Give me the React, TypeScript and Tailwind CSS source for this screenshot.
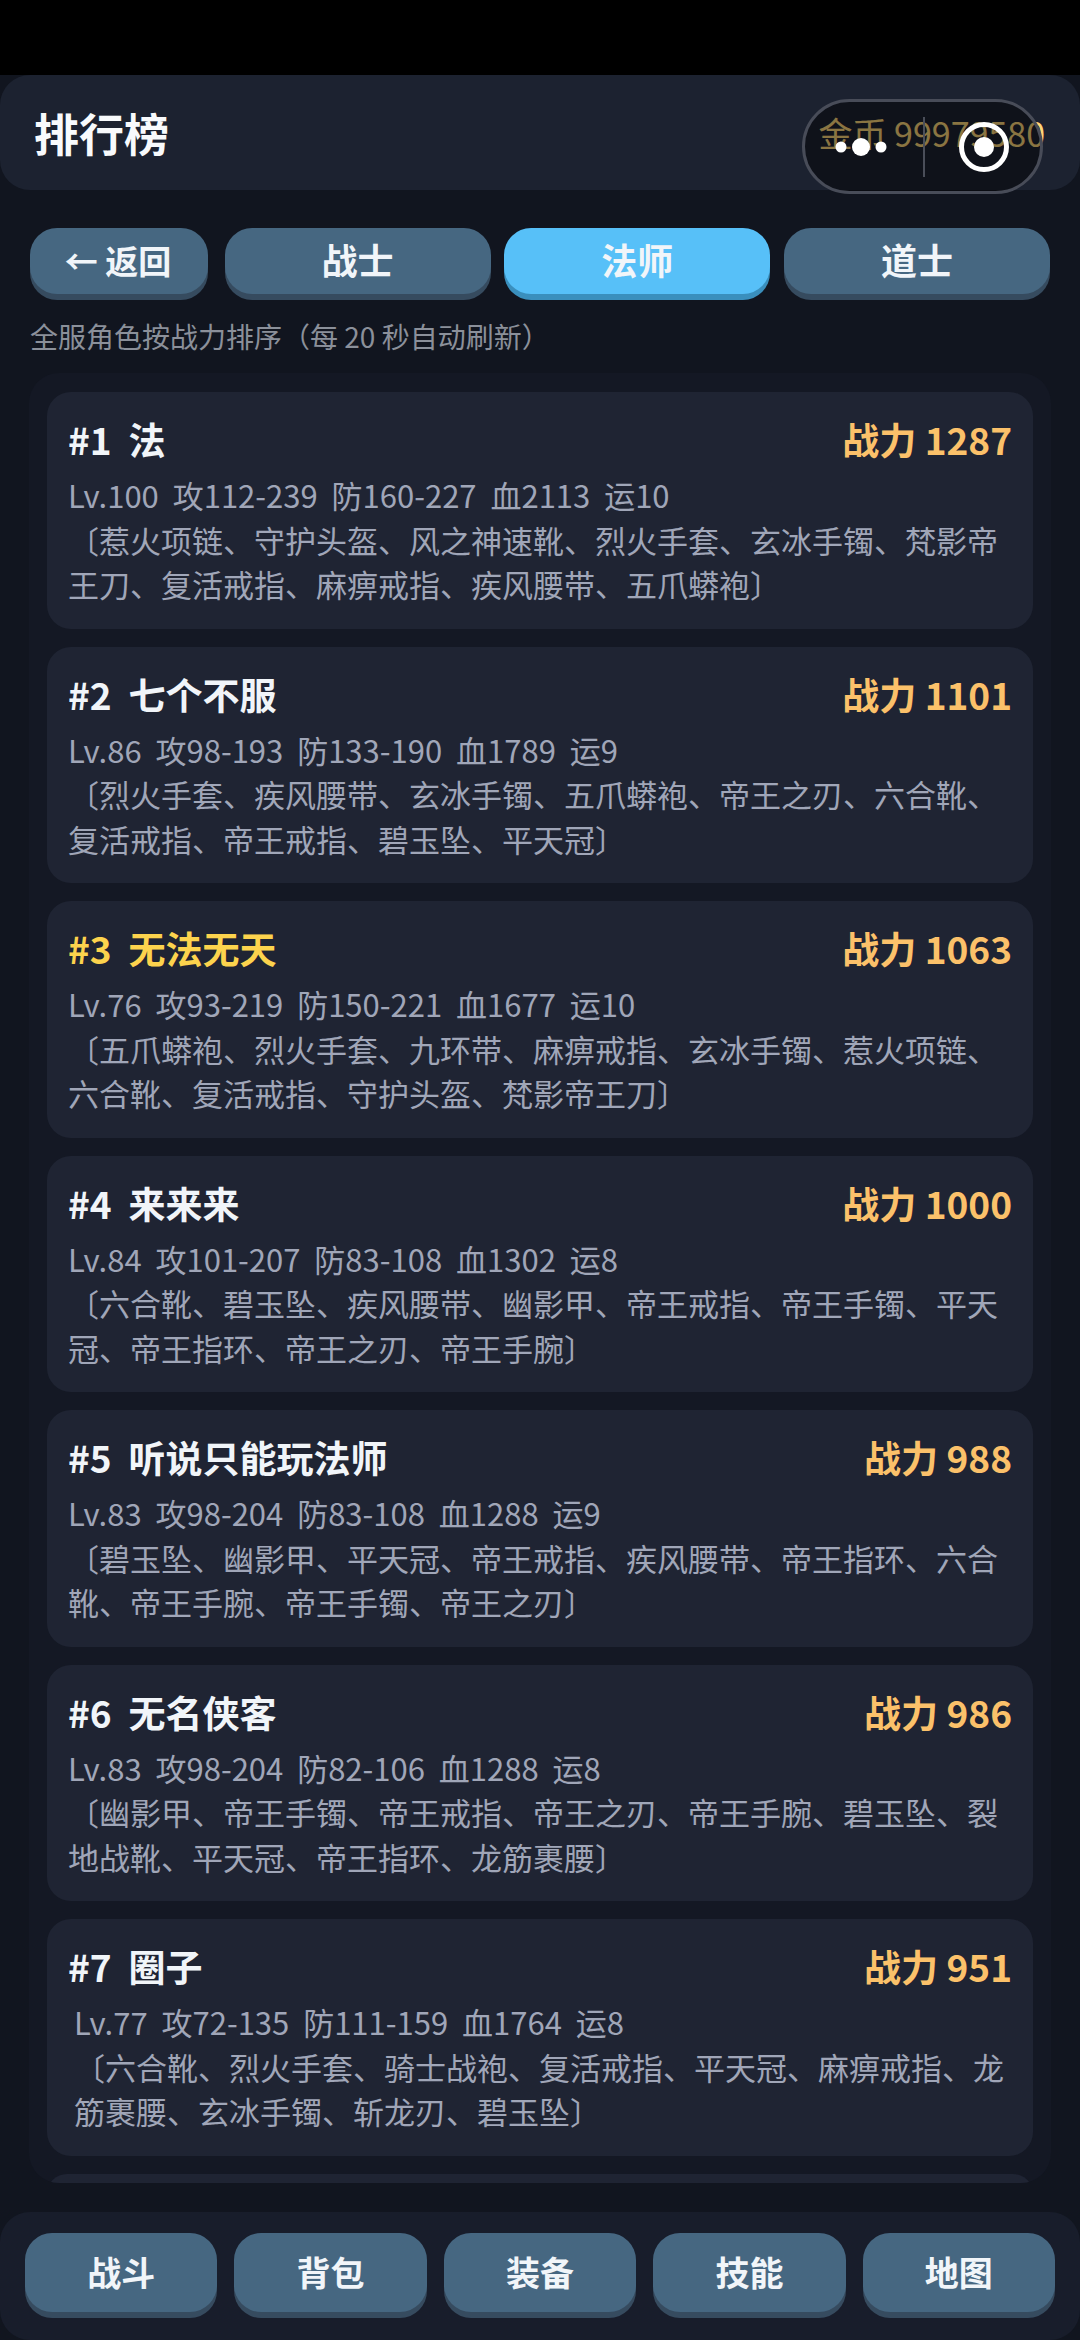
const FONT = "font-['Noto_Sans_CJK_SC','Noto_Sans',sans-serif]";

type Player = {
  rank: number;
  name: string;
  power: number;
  stats: string;
  gear: string;
  gold?: boolean;
  indent?: boolean;
};

const players: Player[] = [
  { rank: 1, name: "法", power: 1287, stats: "Lv.100\u00a0\u00a0攻112-239\u00a0\u00a0防160-227\u00a0\u00a0血2113\u00a0\u00a0运10", gear: "〔惹火项链、守护头盔、风之神速靴、烈火手套、玄冰手镯、梵影帝王刀、复活戒指、麻痹戒指、疾风腰带、五爪蟒袍〕" },
  { rank: 2, name: "七个不服", power: 1101, stats: "Lv.86\u00a0\u00a0攻98-193\u00a0\u00a0防133-190\u00a0\u00a0血1789\u00a0\u00a0运9", gear: "〔烈火手套、疾风腰带、玄冰手镯、五爪蟒袍、帝王之刃、六合靴、复活戒指、帝王戒指、碧玉坠、平天冠〕" },
  { rank: 3, name: "无法无天", power: 1063, gold: true, stats: "Lv.76\u00a0\u00a0攻93-219\u00a0\u00a0防150-221\u00a0\u00a0血1677\u00a0\u00a0运10", gear: "〔五爪蟒袍、烈火手套、九环带、麻痹戒指、玄冰手镯、惹火项链、六合靴、复活戒指、守护头盔、梵影帝王刀〕" },
  { rank: 4, name: "来来来", power: 1000, stats: "Lv.84\u00a0\u00a0攻101-207\u00a0\u00a0防83-108\u00a0\u00a0血1302\u00a0\u00a0运8", gear: "〔六合靴、碧玉坠、疾风腰带、幽影甲、帝王戒指、帝王手镯、平天冠、帝王指环、帝王之刃、帝王手腕〕" },
  { rank: 5, name: "听说只能玩法师", power: 988, stats: "Lv.83\u00a0\u00a0攻98-204\u00a0\u00a0防83-108\u00a0\u00a0血1288\u00a0\u00a0运9", gear: "〔碧玉坠、幽影甲、平天冠、帝王戒指、疾风腰带、帝王指环、六合靴、帝王手腕、帝王手镯、帝王之刃〕" },
  { rank: 6, name: "无名侠客", power: 986, stats: "Lv.83\u00a0\u00a0攻98-204\u00a0\u00a0防82-106\u00a0\u00a0血1288\u00a0\u00a0运8", gear: "〔幽影甲、帝王手镯、帝王戒指、帝王之刃、帝王手腕、碧玉坠、裂地战靴、平天冠、帝王指环、龙筋裹腰〕" },
  { rank: 7, name: "圈子", power: 951, indent: true, stats: "Lv.77\u00a0\u00a0攻72-135\u00a0\u00a0防111-159\u00a0\u00a0血1764\u00a0\u00a0运8", gear: "〔六合靴、烈火手套、骑士战袍、复活戒指、平天冠、麻痹戒指、龙筋裹腰、玄冰手镯、斩龙刃、碧玉坠〕" },
];

function RaisedButton({ label, active, className }: { label: string; active?: boolean; className: string }) {
  return (
    <button
      className={`rounded-[27px] font-bold text-[#f1f5f9] ${
        active ? "bg-[#57c0f8] shadow-[0_6px_0_#3a8fbd]" : "bg-[#466781] shadow-[0_6px_0_#364b5f]"
      } ${className}`}
    >
      {label}
    </button>
  );
}

function PlayerCard({ p }: { p: Player }) {
  return (
    <div className="shrink-0 rounded-[24px] bg-[#1f2433] pb-[22px] pl-[21px] pr-[21px] pt-[21px]">
      <div className="flex h-[54px] items-center justify-between text-[37px] font-bold">
        <span className={`whitespace-pre ${p.gold ? "text-[#fcd34d]" : "text-[#f1f5f9]"}`}>
          #{p.rank}{"\u00a0\u00a0"}{p.name}
        </span>
        <span className="text-[#fbc16a]">战力 {p.power}</span>
      </div>
      <div className={`mt-[6px] text-[31px] leading-[44.5px] text-[#a0a6b8] ${p.indent ? "pl-[6px]" : ""}`}>
        <div>{p.stats}</div>
        <div>{p.gear}</div>
      </div>
    </div>
  );
}

// Floating mini-program capsule: more menu, divider, close ring
function Capsule() {
  return (
    <div className="absolute left-[802px] top-[99px] flex h-[95px] w-[241px] items-center rounded-full border-[3px] border-[#484c58] bg-black/45">
      <svg width="235" height="89" viewBox="0 0 235 89" fill="none">
        <circle cx="36" cy="45" r="5.5" fill="#fff" />
        <circle cx="56" cy="45" r="9" fill="#fff" />
        <circle cx="76" cy="45" r="5.5" fill="#fff" />
        <rect x="118" y="15" width="2" height="60" fill="#4a4e59" />
        <circle cx="179" cy="45" r="22.5" stroke="#fff" strokeWidth="5" />
        <circle cx="179" cy="45" r="10" fill="#fff" />
      </svg>
    </div>
  );
}

export default function App() {
  return (
    <div className={`relative flex h-[2340px] w-[1080px] flex-col overflow-hidden bg-black ${FONT}`}>
      <div className="h-[75px] shrink-0 bg-black" />
      <div className="flex min-h-0 flex-1 flex-col bg-[#11151f]">
        <header className="flex h-[115px] shrink-0 items-center justify-between rounded-[30px] bg-[#1c2230] pl-[34px] pr-[35px]">
          <h1 className="text-[45px] font-bold text-[#f8fafc]">排行榜</h1>
          <span className="text-[34px] text-[#fcd679]">金币 99979580</span>
        </header>

        <nav className="mt-[38px] flex shrink-0 gap-[13.5px] px-[30px] text-[36px] leading-[60px]">
          <RaisedButton label="← 返回" className="mr-[3px] h-[66px] w-[178px] pb-[3px] pr-[2px] text-[33px]" />
          <RaisedButton label="战士" className="h-[66px] flex-1 pb-[4px]" />
          <RaisedButton label="法师" active className="h-[66px] flex-1 pb-[4px]" />
          <RaisedButton label="道士" className="h-[66px] flex-1 pb-[4px]" />
        </nav>

        <p className="ml-[30px] mt-[22px] h-[40px] shrink-0 text-[28px] leading-[40px] text-[#8b909a]">
          全服角色按战力排序（每 20 秒自动刷新）
        </p>

        <section className="mx-[29px] mt-[17px] flex h-[1810px] shrink-0 flex-col gap-[18px] overflow-hidden rounded-[30px] bg-[#141824] px-[18px] pt-[19px]">
          {players.map((p) => (
            <PlayerCard key={p.rank} p={p} />
          ))}
          <div className="h-[40px] shrink-0 rounded-[24px] bg-[#1f2433]" />
        </section>

        <footer className="mt-auto flex shrink-0 gap-[17px] rounded-[30px] bg-[#181d2b] px-[25px] pb-[28px] pt-[21px] text-[34px]">
          {["战斗", "背包", "装备", "技能", "地图"].map((t) => (
            <RaisedButton key={t} label={t} className="h-[79px] flex-1 pb-[2px] leading-[72px]" />
          ))}
        </footer>
      </div>
      <Capsule />
    </div>
  );
}
